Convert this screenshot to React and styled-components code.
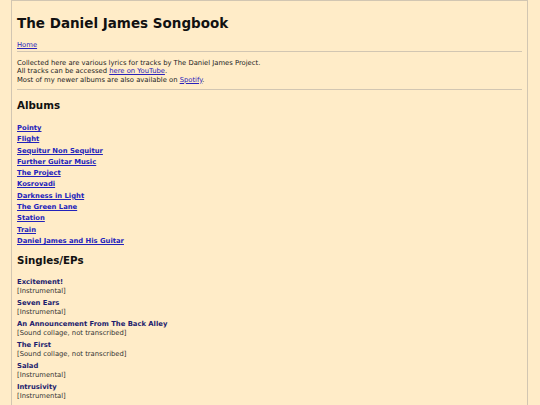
import React from 'react'
import styled, { createGlobalStyle } from 'styled-components'

const GlobalStyle = createGlobalStyle`
  html, body {
    margin: 0;
    padding: 0;
    background: #ffecc8;
  }
  body {
    font-family: "DejaVu Sans", Verdana, sans-serif;
    font-size: 6.8px;
    color: #222;
  }
`

const Page = styled.div`
  margin: 0 12px 0 11px;
  border: 1px solid #d2c6b2;
  border-bottom: none;
  padding: 0 5px 8px 5px;
  min-height: 405px;
  box-sizing: border-box;
`

const Title = styled.h1`
  font-size: 13.5px;
  font-weight: bold;
  margin: 0;
  padding-top: 14px;
  color: #111;
`

const Nav = styled.div`
  margin-top: 10px;
  line-height: 8.5px;
  > a {
    color: #2a22bb;
  }
`

const Rule = styled.hr`
  border: none;
  border-top: 1px solid #d2c6b2;
  margin: ${(p) => p.$top}px 0 0 0;
`

const Intro = styled.p`
  margin: 7px 0 0 0;
  line-height: 8.5px;
  > a {
    color: #2a22bb;
  }
`

const Heading = styled.h2`
  font-size: 10.3px;
  font-weight: bold;
  margin: ${(p) => p.$top}px 0 0 0;
  color: #111;
`

const AlbumList = styled.div`
  margin-top: 13px;
  display: flex;
  flex-direction: column;
  gap: 2.8px;
`

const AlbumLink = styled.a`
  font-weight: bold;
  color: #2222bb;
  line-height: 8.5px;
`

const SingleList = styled.div`
  margin-top: 12px;
  display: flex;
  flex-direction: column;
  gap: 4px;
`

const Single = styled.div`
  line-height: 8.5px;
`

const SingleName = styled.div`
  font-weight: bold;
  color: #1d1d6e;
`

const Note = styled.div`
  color: #333;
`

const albums = [
  'Pointy',
  'Flight',
  'Sequitur Non Sequitur',
  'Further Guitar Music',
  'The Project',
  'Kosrovadi',
  'Darkness in Light',
  'The Green Lane',
  'Station',
  'Train',
  'Daniel James and His Guitar',
]

const singles = [
  ['Excitement!', '[Instrumental]'],
  ['Seven Ears', '[Instrumental]'],
  ['An Announcement From The Back Alley', '[Sound collage, not transcribed]'],
  ['The First', '[Sound collage, not transcribed]'],
  ['Salad', '[Instrumental]'],
  ['Intrusivity', '[Instrumental]'],
]

const App = () => {
  return (
    <>
      <GlobalStyle />
      <Page>
        <Title>The Daniel James Songbook</Title>
        <Nav>
          <a href="#">Home</a>
        </Nav>
        <Rule $top={1} />
        <Intro>
          Collected here are various lyrics for tracks by The Daniel James Project.
          <br />
          All tracks can be accessed <a href="#">here on YouTube</a>.
          <br />
          Most of my newer albums are also available on <a href="#">Spotify</a>.
        </Intro>
        <Rule $top={5} />
        <Heading $top={9}>Albums</Heading>
        <AlbumList>
          {albums.map((name) => (
            <AlbumLink key={name} href="#">
              {name}
            </AlbumLink>
          ))}
        </AlbumList>
        <Heading $top={9}>Singles/EPs</Heading>
        <SingleList>
          {singles.map(([name, note]) => (
            <Single key={name}>
              <SingleName>{name}</SingleName>
              <Note>{note}</Note>
            </Single>
          ))}
        </SingleList>
      </Page>
    </>
  )
}

export default App
